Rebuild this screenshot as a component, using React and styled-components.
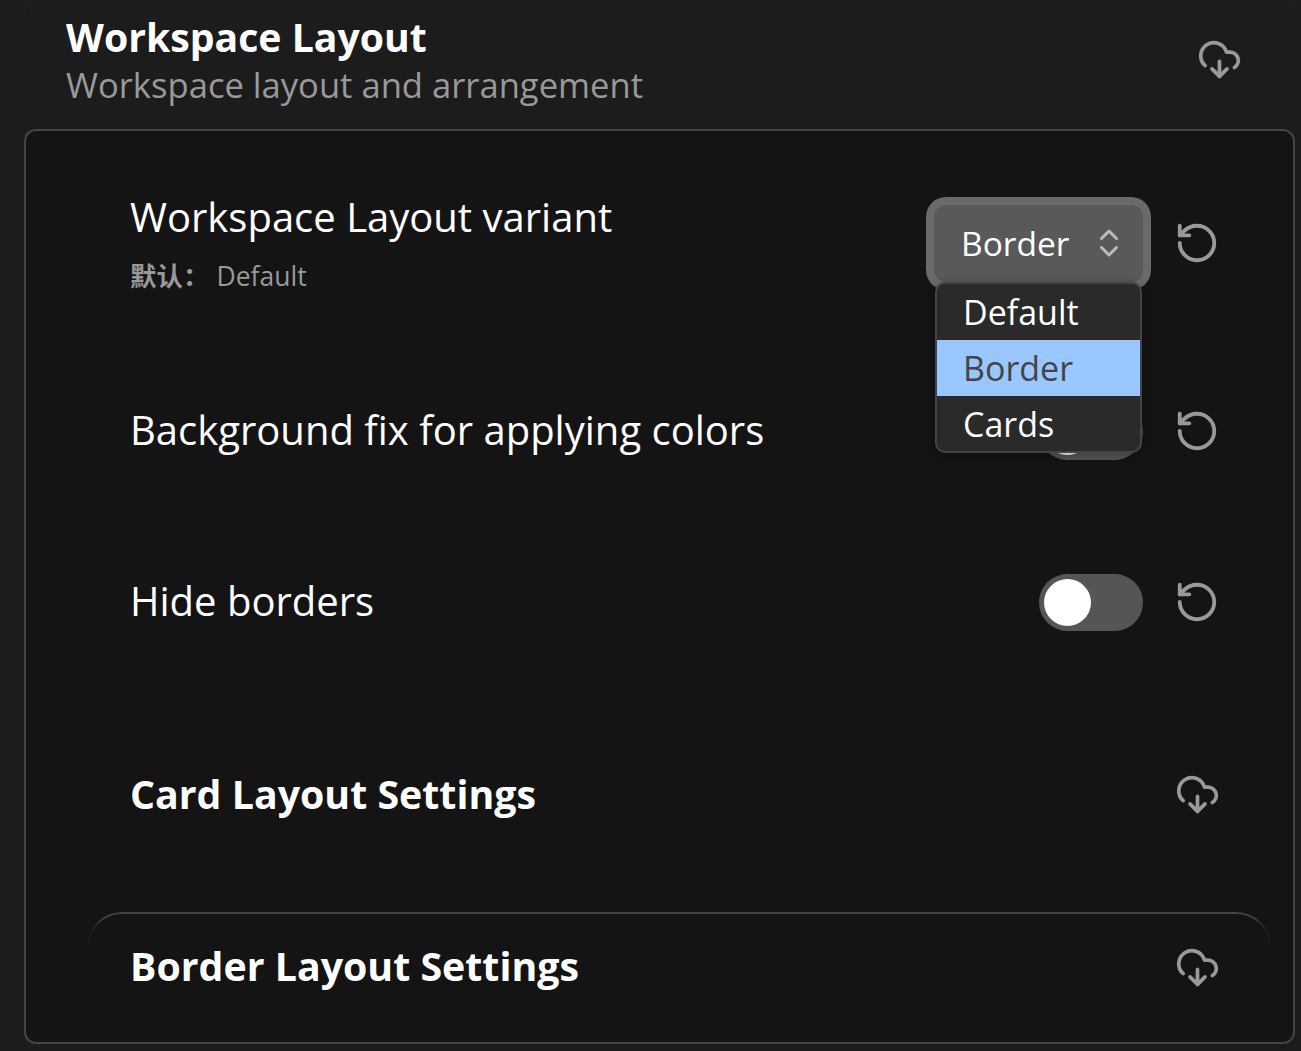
import React from "react";
import styled, { createGlobalStyle } from "styled-components";
import { RotateCcw, CloudDownload, ChevronsUpDown } from "lucide-react";

const GlobalStyle = createGlobalStyle`
  html, body {
    margin: 0;
    height: 100%;
    overflow: hidden;
    background: #1c1c1c;
  }
  body {
    font-family: "Open Sans", "Noto Sans CJK SC", sans-serif;
    color: #fff;
  }
`;

const Page = styled.div`
  width: 1301px;
  height: 1051px;
  box-sizing: border-box;
  padding: 0 6px 0 24px;
  overflow: hidden;
`;

const Group = styled.section`
  margin-top: -20px;
  border-top: 2px solid #3a3a3a;
  border-radius: 34px 34px 0 0;
`;

const GroupHeader = styled.header`
  height: 147px;
  box-sizing: border-box;
  padding: 10px 51px 0 42px;
  display: flex;
  align-items: center;
  justify-content: space-between;
`;

const GroupTitle = styled.h2`
  margin: 0;
  font-size: 39.2px;
  line-height: 48px;
  font-weight: 700;
`;

const GroupDesc = styled.div`
  font-size: 34.6px;
  line-height: 48px;
  color: #999;
`;

const Panel = styled.div`
  height: 915px;
  box-sizing: border-box;
  background: #141414;
  border: 2px solid #444;
  border-radius: 12px;
  padding: 0 23px 0 62px;
`;

const Row = styled.div`
  height: ${props => props.$height}px;
  box-sizing: border-box;
  padding: 0 55px 0 42px;
  display: flex;
  align-items: center;
  justify-content: space-between;
`;

const Heading = styled(Row)`
  margin-top: ${props => props.$gap || 0}px;
  border-top: ${props => (props.$ruled ? "2px solid #444" : "none")};
  border-radius: ${props => (props.$ruled ? "34px 34px 0 0" : "0")};
`;

const RowLabel = styled.div`
  font-size: 40px;
  line-height: 52px;
  padding-bottom: 2px;
`;

const HeadingLabel = styled.div`
  font-size: 39.3px;
  line-height: 52px;
  font-weight: 700;
  padding-bottom: 2px;
`;

const DefaultLine = styled.div`
  margin-top: 13px;
  padding-bottom: 2px;
  display: flex;
  gap: 7px;
  font-size: 26.5px;
  line-height: 36px;
  color: #999;
`;

const DefaultKey = styled.span`
  font-weight: 700;
`;

const Controls = styled.div`
  display: flex;
  align-items: center;
  gap: 29px;
`;

const IconSlot = styled.span`
  display: flex;
  align-items: center;
  justify-content: center;
  width: 50px;
  height: 50px;
  margin-right: -7px;
  color: #999;
`;

const HeaderIcon = styled(IconSlot)`
  margin-right: 0;
  margin-bottom: 2px;
`;

const SelectWrap = styled.div`
  position: relative;
`;

const SelectBox = styled.div`
  width: 209px;
  height: 77px;
  box-sizing: border-box;
  padding: 0 16px 0 27px;
  display: flex;
  align-items: center;
  justify-content: space-between;
  background: #595959;
  border-radius: 12px;
  box-shadow: 0 0 0 8px #6a6a6a;
  font-size: 33.5px;
`;

const SelectArrow = styled.span`
  display: flex;
  color: #bbb;
`;

const Menu = styled.ul`
  position: absolute;
  z-index: 2;
  top: 77px;
  left: 1px;
  width: 207px;
  height: 171px;
  margin: 0;
  padding: 0;
  list-style: none;
  box-sizing: border-box;
  background: #2a2a2a;
  border: 2px solid #444;
  border-radius: 10px;
  box-shadow: 0 2px 10px rgba(0, 0, 0, 0.3);
  overflow: hidden;
`;

const MenuItem = styled.li`
  height: 56px;
  padding-left: 26px;
  font-size: 34px;
  line-height: 56px;
  background: ${props => (props.$active ? "#9ac7ff" : "transparent")};
  color: ${props => (props.$active ? "#444" : "#fff")};
`;

const Toggle = styled.div`
  width: 104px;
  height: 57px;
  box-sizing: border-box;
  padding: 5px;
  border-radius: 29px;
  background: #555;
`;

const Knob = styled.div`
  width: 47px;
  height: 47px;
  border-radius: 50%;
  background: #fff;
`;

const ResetButton = () => (
  <IconSlot>
    <RotateCcw size={46} />
  </IconSlot>
);

const CloudButton = () => (
  <IconSlot>
    <CloudDownload size={45} />
  </IconSlot>
);

const options = ["Default", "Border", "Cards"];

const App = () => {
  return (
    <>
      <GlobalStyle />
      <Page>
        <Group>
          <GroupHeader>
            <div>
              <GroupTitle>Workspace Layout</GroupTitle>
              <GroupDesc>Workspace layout and arrangement</GroupDesc>
            </div>
            <HeaderIcon>
              <CloudDownload size={45} />
            </HeaderIcon>
          </GroupHeader>
          <Panel>
            <Row $height={224}>
              <div>
                <RowLabel>Workspace Layout variant</RowLabel>
                <DefaultLine>
                  <DefaultKey>默认：</DefaultKey>
                  <span>Default</span>
                </DefaultLine>
              </div>
              <Controls>
                <SelectWrap>
                  <SelectBox>
                    Border
                    <SelectArrow>
                      <ChevronsUpDown size={36} />
                    </SelectArrow>
                  </SelectBox>
                  <Menu>
                    {options.map(o => (
                      <MenuItem key={o} $active={o === "Border"}>
                        {o}
                      </MenuItem>
                    ))}
                  </Menu>
                </SelectWrap>
                <ResetButton />
              </Controls>
            </Row>
            <Row $height={152}>
              <RowLabel>Background fix for applying colors</RowLabel>
              <Controls>
                <Toggle>
                  <Knob />
                </Toggle>
                <ResetButton />
              </Controls>
            </Row>
            <Row $height={190}>
              <RowLabel>Hide borders</RowLabel>
              <Controls>
                <Toggle>
                  <Knob />
                </Toggle>
                <ResetButton />
              </Controls>
            </Row>
            <Heading $height={195}>
              <HeadingLabel>Card Layout Settings</HeadingLabel>
              <CloudButton />
            </Heading>
            <Heading $height={108} $gap={20} $ruled>
              <HeadingLabel>Border Layout Settings</HeadingLabel>
              <CloudButton />
            </Heading>
          </Panel>
        </Group>
      </Page>
    </>
  );
};

export default App;
